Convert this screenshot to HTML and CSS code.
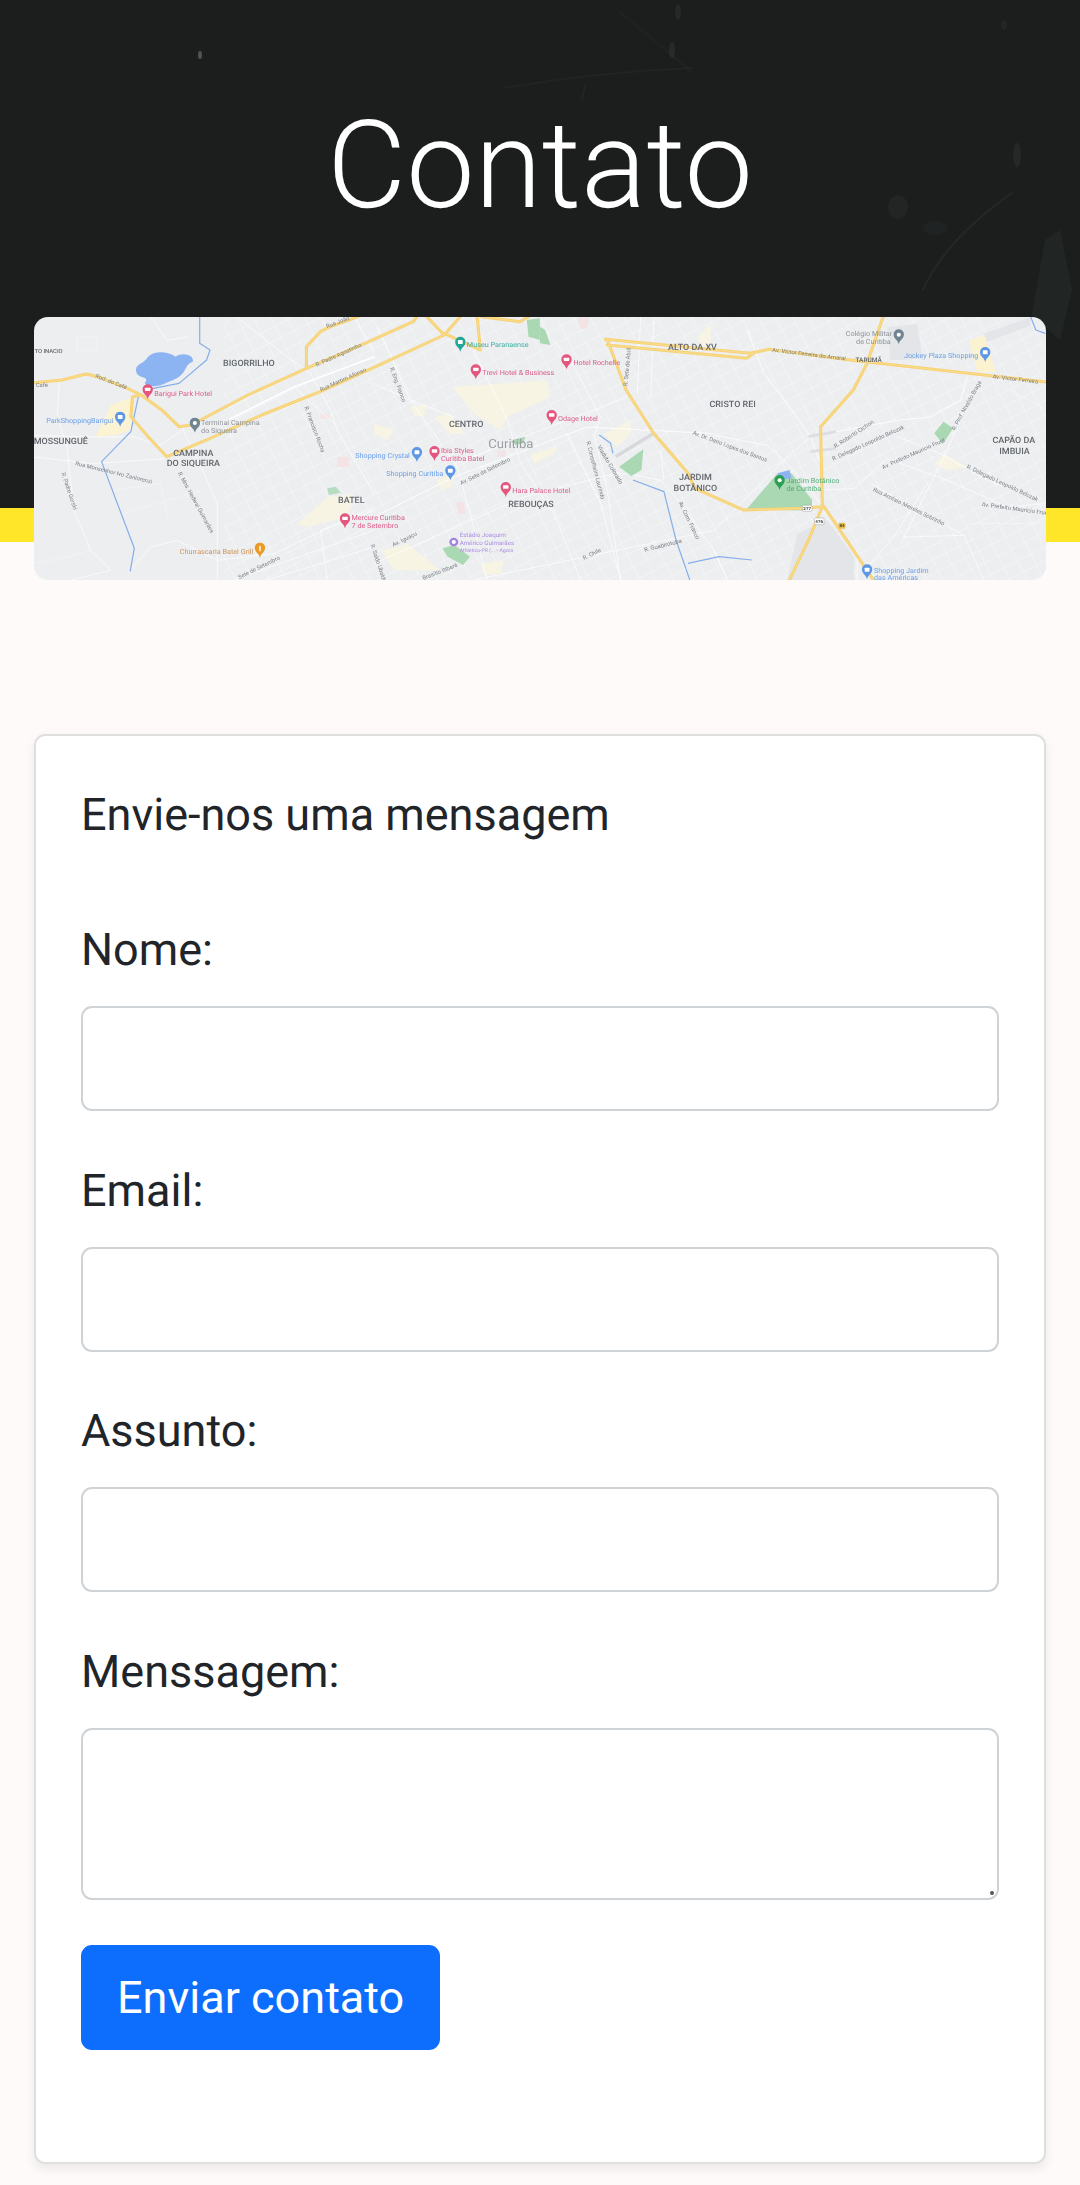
FILE: index.html
```html
<!DOCTYPE html>
<html lang="pt-BR">
<head>
    <meta charset="utf-8">
    <title>Contato</title>
    <link rel="stylesheet" href="styles.css">
</head>
<body>

<header class="hero">
    <svg class="hero-marks" viewBox="0 0 1080 508" xmlns="http://www.w3.org/2000/svg">
        <g fill="none" stroke="#8a9490" stroke-linecap="round">
            <path d="M503 88Q600 72 692 68" stroke-width="2" opacity=".1"/>
            <path d="M582 100L585 85" stroke-width="2" opacity=".12"/>
            <path d="M923 290Q945 240 1012 193" stroke-width="2" opacity=".16"/>
            <path d="M620 12L690 70" stroke-width="3" opacity=".06"/>
        </g>
        <g fill="#9aa5a0">
            <ellipse cx="200" cy="55" rx="2" ry="4" opacity=".8"/>
            <ellipse cx="672" cy="50" rx="3" ry="8" opacity=".18"/>
            <ellipse cx="678" cy="12" rx="3" ry="8" opacity=".15"/>
            <ellipse cx="1017" cy="155" rx="4" ry="12" opacity=".15"/>
            <ellipse cx="898" cy="207" rx="10" ry="12" opacity=".1"/>
            <ellipse cx="935" cy="228" rx="12" ry="7" opacity=".08"/>
            <ellipse cx="1004" cy="25" rx="3" ry="5" opacity=".12"/>
        </g>
        <path d="M1032 315L1045 240 1060 230 1072 290 1060 340Z" fill="#3d5045" opacity=".35"/>
    </svg>
    <h1 class="hero-title">Contato</h1>
</header>

<section class="map-box">
    <svg class="map" viewBox="0 0 1012 263" preserveAspectRatio="none" xmlns="http://www.w3.org/2000/svg">
        <defs>
            <pattern id="streets" width="15" height="13" patternUnits="userSpaceOnUse" patternTransform="rotate(-27)">
                <path d="M0 0H15M0 0V13" stroke="#fff" stroke-width="1" fill="none" opacity=".6"/>
            </pattern>
            <path id="pin" d="M0 23C-3 9-15 7-15-7a15 15 0 1 1 30 0C15 7 3 9 0 23Z"/>
            <g id="hotel">
                <use href="#pin"/>
                <rect x="-8" y="-12" width="16" height="10" rx="2" fill="#fff"/>
            </g>
            <g id="shop">
                <use href="#pin"/>
                <rect x="-7" y="-12" width="14" height="12" rx="2" fill="#fff"/>
            </g>
            <g id="place">
                <use href="#pin"/>
                <circle cy="-6" r="6" fill="#fff"/>
            </g>
            <path id="roadsLeft" d="M0 258L180 240 250 222 290 232 370 265 410 285 470 330 520 380 555 375 720 285 890 205 1060 130 1200 65 1225 30M385 290L380 350 430 410 485 470 600 420 760 345 930 275 1080 205 1290 105 1240 50M890 205L890 140 930 95 960 80 1040 50M385 290L410 285M1290 105L1345 40M1290 100L1395 150 1385 40M1400 50L1510 65 1535 50"/>
            <path id="roadsRight" d="M190 118L610 160 665 148 900 180 1480 247M195 135L600 175 620 160M195 118L250 270 330 400 430 520 450 565 590 630 760 625 820 620 815 380 910 270 950 190 1000 40M820 620L780 720 720 850M825 620L975 850"/>
        </defs>

        <rect width="1012" height="263" fill="#eceef0"/>
        <rect x="190" width="822" height="263" fill="url(#streets)"/>

        <!-- pale built-up areas and malls -->
        <g transform="scale(.3333)" fill="#fbf3d2">
            <path d="M185 360L230 265 295 240 290 340 240 355Z"/>
            <path d="M790 620L880 540 960 530 940 600 820 630Z" fill="#f7f4e4"/>
        </g>
        <g transform="translate(340,0) scale(.3333)" fill="#f7f4e4">
            <path d="M235 210L520 190 530 240 400 300 380 340 300 290Z"/>
            <path d="M110 270L160 260 150 300 120 295Z"/>
            <path d="M180 300L230 290 270 350 230 350Z"/>
            <path d="M0 320L60 340 40 370 0 350Z"/>
            <path d="M470 410L550 390 540 410 480 440Z"/>
            <path d="M690 350L770 310 770 350 730 390Z"/>
            <path d="M20 700L100 680 200 760 60 760Z"/>
            <path d="M320 740L390 730 380 770 330 775Z"/>
            <path d="M970 60L1010 20 1010 80 980 90Z"/>
            <path d="M190 490L240 470 230 510 200 520Z"/>
        </g>
        <g transform="translate(680,0) scale(.3333)">
            <path d="M765 70L810 55 845 165 790 165Z" fill="#faf2d0"/>
            <path d="M660 440L690 410 760 450 700 460Z" fill="#f7f4e4"/>
            <g fill="#e3e5e8">
                <path d="M520 30L610 20 625 125 530 130Z"/>
                <path d="M250 650L340 610 420 720 420 789 220 789Z"/>
                <path d="M810 50L950 0 950 25 820 75Z"/>
            </g>
        </g>
        <g transform="translate(340,0) scale(.3333)" fill="#f4e3e4">
            <path d="M610 0h35l-5 35h-22Z"/>
            <path d="M245 555h25l5 35h-22Z"/>
            <path d="M370 400h25v20h-25Z"/>
        </g>
        <g transform="scale(.3333)" fill="#f4e3e4">
            <path d="M910 420h35v30h-35Z"/>
            <path d="M860 290h25v15h-25Z"/>
        </g>

        <!-- streets -->
        <g fill="none" stroke="#fff" stroke-width="2" stroke-linecap="round" stroke-linejoin="round">
            <g transform="scale(.3333)">
                <path d="M0 355L180 360 300 360 380 385 450 335"/>
                <path d="M0 420L90 430 180 440 390 425"/>
                <path d="M75 200L70 290 100 400 120 580 170 700 230 760 110 789"/>
                <path d="M610 0L740 105 830 170 890 280 910 340 1020 530"/>
                <path d="M445 335L510 470 550 560 550 789"/>
                <path d="M280 770L350 690 430 670 550 730 720 710 1020 570"/>
                <path d="M860 640L1020 580M860 640L880 789"/>
                <path d="M600 789L1020 640M700 789L1020 690"/>
                <path d="M560 320L780 210 1020 120" stroke-width="5"/>
                <path d="M960 0L1020 100M780 210L900 320"/>
                <path d="M350 0L400 70 460 60"/>
                <path d="M130 60L190 60 190 100 130 100Z" stroke-width="1"/>
                <path d="M240 520L380 500 400 600M270 590L500 520" stroke-width="1"/>
                <path d="M0 740L100 720 170 700" stroke-width="1"/>
            </g>
            <g transform="translate(340,0) scale(.3333)">
                <path d="M10 30L110 250 250 450 280 560 340 789"/>
                <path d="M300 100L400 310 440 440 540 590 620 789"/>
                <path d="M540 70L600 150 680 300 660 360"/>
                <path d="M0 600L240 480 640 330 830 340 1020 350" stroke-width="2.5"/>
                <path d="M240 440L760 240"/>
                <path d="M0 740L450 540 720 470 760 470 860 490 920 560 1020 700"/>
                <path d="M580 350L680 560 740 789M660 350L700 520 740 789"/>
                <path d="M860 400L870 490"/>
                <path d="M300 789L1020 640"/>
                <path d="M840 0L830 240M800 0L790 230"/>
                <path d="M0 200L110 250 240 300"/>
            </g>
            <g transform="translate(680,0) scale(.3333)">
                <path d="M100 40L150 170 220 260 290 360 320 440" stroke-width="2.5"/>
                <path d="M0 355L160 385 230 450 320 560"/>
                <path d="M360 345L550 310 650 300 740 250 760 180" stroke-width="2.5"/>
                <path d="M550 360L680 410 820 490 980 545"/>
                <path d="M300 520L420 515 520 425 700 490 880 570 990 560"/>
                <path d="M0 640L100 540 220 420 290 360"/>
                <path d="M470 500L750 655 810 789"/>
                <path d="M640 500L540 660 470 740M750 655L570 660"/>
                <path d="M0 700L40 789" stroke-width="3"/>
                <path d="M430 700L430 789"/>
                <path d="M800 180L680 440 560 680"/>
                <path d="M850 200L1000 280M760 620L990 620" stroke-width="1"/>
            </g>
        </g>

        <!-- left half, in zoom units -->
        <g transform="translate(-34,-17) scale(.3443,.3333)">
            <g fill="none" stroke="#86aeea" stroke-width="3.5" stroke-linejoin="round">
                <path d="M580 50L580 130 610 150 600 180 520 250 430 268"/>
                <path d="M402 290L380 395 295 485 390 745 378 815"/>
            </g>
            <path d="M395 210C395 190 420 190 430 170 450 150 490 155 510 170 530 155 565 165 560 185 530 195 550 225 490 245 460 262 430 262 420 250 440 225 395 240 395 210Z" fill="#8cb4f2"/>
            <path d="M1285 745L1320 735 1365 770 1345 795 1300 770Z" fill="#a9d8b3"/>
            <path d="M950 565L975 560 990 578 955 585Z" fill="#b7dcc0"/>
            <path d="M1530 60L1568 55 1568 120 1535 110Z" fill="#a9d8b3"/>
            <path d="M1490 420L1525 410 1520 430 1495 435Z" fill="#a9d8b3"/>
            <use href="#roadsLeft" fill="none" stroke="#f7d272" stroke-width="9" stroke-linejoin="round" stroke-linecap="round"/>
            <use href="#roadsLeft" fill="none" stroke="#fbe6ae" stroke-width="1.5"/>

            <g fill="#63676c" font-weight="500" font-size="26">
                <text x="648" y="198">BIGORRILHO</text>
                <text x="98" y="433">MOSSUNGUÊ</text>
                <text x="503" y="468">CAMPINA</text>
                <text x="484" y="497">DO SIQUEIRA</text>
                <text x="1304" y="381">CENTRO</text>
                <text x="982" y="608">BATEL</text>
                <text x="1476" y="620">REBOUÇAS</text>
                <text x="100" y="160" font-size="17">TO INACIO</text>
                <text x="1418" y="444" font-size="38" font-weight="400" fill="#9a9ea3">Curitiba</text>
            </g>
            <g fill="#7d8287" font-size="17">
                <text x="276" y="232" transform="rotate(22 276 232)">Rod. do Café</text>
                <text x="104" y="262">Café</text>
                <text x="950" y="85" transform="rotate(-22 950 85)">Rua João</text>
                <text x="920" y="200" transform="rotate(-25 920 200)">R. Padre Agostinho</text>
                <text x="932" y="275" transform="rotate(-25 932 275)">Rua Martim Afonso</text>
                <text x="1132" y="205" transform="rotate(70 1132 205)">R. Eng. Franco</text>
                <text x="884" y="322" transform="rotate(70 884 322)">R. Francisco Rocha</text>
                <text x="218" y="495" transform="rotate(14 218 495)">Rua Monsenhor Ivo Zanlorenzi</text>
                <text x="178" y="520" transform="rotate(72 178 520)">R. Padre Gorski</text>
                <text x="516" y="520" transform="rotate(62 516 520)">R. Mns. Hedwal Guimarães</text>
                <text x="1340" y="555" transform="rotate(-27 1340 555)">Av. Sete de Setembro</text>
                <text x="695" y="838" transform="rotate(-27 695 838)">Sete de Setembro</text>
                <text x="1143" y="740" transform="rotate(-27 1143 740)">Av. Iguaçu</text>
                <text x="1076" y="735" transform="rotate(72 1076 735)">R. Saldo Ubaldo</text>
                <text x="1230" y="840" transform="rotate(-22 1230 840)">Brasílio Itiberê</text>
            </g>

            <g fill="#dc5c8c" font-size="21">
                <text x="448" y="287">Barigui Park Hotel</text>
                <text x="1401" y="225">Trevi Hotel &amp; Business</text>
                <text x="1281" y="459">Ibis Styles</text>
                <text x="1281" y="483">Curitiba Batel</text>
                <text x="1488" y="580">Hara Palace Hotel</text>
                <text x="1021" y="661">Mercure Curitiba</text>
                <text x="1021" y="685">7 de Setembro</text>
            </g>
            <g fill="#6ba1ea" font-size="21">
                <text x="134" y="369">ParkShoppingBarigui</text>
                <text x="1032" y="475">Shopping Crystal</text>
                <text x="1122" y="529">Shopping Curitiba</text>
            </g>
            <text x="584" y="375" fill="#8f9398" font-size="21">Terminal Campina</text>
            <text x="584" y="399" fill="#8f9398" font-size="21">do Siqueira</text>
            <text x="1356" y="141" fill="#3fafa4" font-size="21">Museu Paranaense</text>
            <text x="522" y="761" fill="#d19355" font-size="21">Churrascaria Batel Grill</text>
            <g fill="#ab8de0" font-size="18">
                <text x="1335" y="710">Estádio Joaquim</text>
                <text x="1335" y="734">Américo Guimarães</text>
                <text x="1335" y="756" font-size="15">Athletico-PR (... • Agora</text>
            </g>

            <g fill="#e5567f">
                <use href="#hotel" x="429" y="275"/>
                <use href="#hotel" x="1382" y="215"/>
                <use href="#hotel" x="1262" y="460"/>
                <use href="#hotel" x="1469" y="568"/>
                <use href="#hotel" x="1002" y="662"/>
            </g>
            <g fill="#5e97e6">
                <use href="#shop" x="349" y="357"/>
                <use href="#shop" x="1211" y="463"/>
                <use href="#shop" x="1308" y="518"/>
            </g>
            <use href="#place" x="566" y="375" fill="#70858f"/>
            <use href="#shop" x="1337" y="132" fill="#22a699"/>
            <use href="#pin" x="755" y="750" fill="#ea9a26"/>
            <rect x="753" y="738" width="4" height="16" fill="#fff"/>
            <circle cx="1318" cy="726" r="13" fill="#a583dc"/>
            <circle cx="1318" cy="726" r="6" fill="#fff"/>
        </g>

        <!-- right half, in zoom units -->
        <g transform="translate(506,-17) scale(.3443,.3333)">
            <path d="M220 470L330 400" stroke="#d6d8dc" stroke-width="10" fill="none"/>
            <path d="M780 410L860 395M785 455L860 445" stroke="#dcdee2" stroke-width="8" fill="none"/>
            <g fill="#a9d8b3">
                <path d="M605 622L690 520 730 520 790 600 790 632 600 628Z"/>
                <path d="M230 500L300 448 295 510 265 528Z"/>
                <path d="M1145 400L1172 365 1200 385 1170 432Z"/>
                <path d="M0 80L15 90 30 135 0 130Z"/>
            </g>
            <g fill="none" stroke="#86aeea" stroke-width="3.5" stroke-linejoin="round">
                <path d="M172 405L205 430 212 460"/>
                <path d="M270 540L360 575 395 720 435 840"/>
                <path d="M430 790L520 770 615 780"/>
                <path d="M1425 50L1440 90 1468 100"/>
            </g>
            <path d="M690 520L725 510 730 535 700 540Z" fill="#8cb4f2"/>
            <use href="#roadsRight" fill="none" stroke="#f7d272" stroke-width="9" stroke-linejoin="round" stroke-linecap="round"/>
            <use href="#roadsRight" fill="none" stroke="#fbe6ae" stroke-width="1.5"/>

            <g fill="#63676c" font-weight="500" font-size="26">
                <text x="372" y="151">ALTO DA XV</text>
                <text x="492" y="321">CRISTO REI</text>
                <text x="404" y="540">JARDIM</text>
                <text x="388" y="574">BOTÂNICO</text>
                <text x="1314" y="430">CAPÃO DA</text>
                <text x="1334" y="463">IMBUIA</text>
                <text x="916" y="187" font-size="19">TARUMÃ</text>
            </g>
            <g fill="#7d8287" font-size="17">
                <text x="674" y="155" transform="rotate(7 674 155)">Av. Victor Ferreira do Amaral</text>
                <text x="1314" y="235" transform="rotate(7 1314 235)">Av. Victor Ferreira</text>
                <text x="254" y="258" transform="rotate(-85 254 258)">R. Sete de Abril</text>
                <text x="442" y="403" transform="rotate(21 442 403)">Av. Dr. Dario Lopes dos Santos</text>
                <text x="858" y="445" transform="rotate(-34 858 445)">R. Roberto Cichon</text>
                <text x="852" y="482" transform="rotate(-25 852 482)">R. Delegado Leopoldo Belczak</text>
                <text x="988" y="510" transform="rotate(-25 988 490)">Av. Prefeito Maurício Fruet</text>
                <text x="1238" y="504" transform="rotate(26 1238 504)">R. Delegado Leopoldo Belczak</text>
                <text x="1282" y="618" transform="rotate(8 1282 618)">Av. Prefeito Maurício Fruet</text>
                <text x="966" y="572" transform="rotate(27 966 572)">Rua Arcésio Meireles Sobrinho</text>
                <text x="1205" y="392" transform="rotate(-62 1205 392)">R. Prof. Nivaldo Braga</text>
                <text x="134" y="425" transform="rotate(76 134 425)">R. Conselheiro Laurindo</text>
                <text x="166" y="440" transform="rotate(60 166 440)">Viaduto Colorado</text>
                <text x="402" y="608" transform="rotate(65 402 608)">Av. Com. Franco</text>
                <text x="304" y="755" transform="rotate(-14 304 755)">R. Guabirotuba</text>
                <text x="128" y="780" transform="rotate(-27 128 780)">R. Chile</text>
            </g>
            <g fill="#dc5c8c" font-size="21">
                <text x="97" y="195">Hotel Rochelle</text>
                <text x="52" y="363">Odage Hotel</text>
            </g>
            <text x="888" y="108" fill="#8f9398" font-size="21">Colégio Militar</text>
            <text x="918" y="132" fill="#8f9398" font-size="21">de Curitiba</text>
            <g fill="#6ba1ea" font-size="21">
                <text x="1057" y="174">Jockey Plaza Shopping</text>
                <text x="970" y="818">Shopping Jardim</text>
                <text x="970" y="840">das Américas</text>
            </g>
            <g fill="#4fae72" font-size="21">
                <text x="716" y="548">Jardim Botânico</text>
                <text x="716" y="572">de Curitiba</text>
            </g>
            <g fill="#e5567f">
                <use href="#hotel" x="77" y="185"/>
                <use href="#hotel" x="34" y="352"/>
            </g>
            <use href="#place" x="1042" y="110" fill="#70858f"/>
            <use href="#shop" x="1293" y="163" fill="#5e97e6"/>
            <use href="#shop" x="950" y="815" fill="#5e97e6"/>
            <use href="#place" x="696" y="547" fill="#2e9e54"/>
            <g font-size="13" font-weight="700" text-anchor="middle" fill="#444">
                <rect x="762" y="616" width="28" height="18" rx="4" fill="#fff" stroke="#777"/>
                <text x="776" y="630">277</text>
                <rect x="797" y="654" width="28" height="20" rx="4" fill="#fff" stroke="#777"/>
                <text x="811" y="669">476</text>
                <rect x="867" y="668" width="20" height="18" rx="3" fill="#e8c04c"/>
                <text x="877" y="682">84</text>
            </g>
        </g>
    </svg>
</section>

<main class="contact">
    <form class="contact-card">
        <h5 class="contact-heading">Envie-nos uma mensagem</h5>

        <div class="field">
            <label for="nome">Nome:</label>
            <input type="text" id="nome" name="nome">
        </div>

        <div class="field">
            <label for="email">Email:</label>
            <input type="email" id="email" name="email">
        </div>

        <div class="field">
            <label for="assunto">Assunto:</label>
            <input type="text" id="assunto" name="assunto">
        </div>

        <div class="field field-last">
            <label for="mensagem">Menssagem:</label>
            <div class="area-wrap">
                <textarea id="mensagem" name="mensagem"></textarea>
            </div>
        </div>

        <button type="submit" class="btn-send">Enviar contato</button>
    </form>
</main>

</body>
</html>
```

FILE: styles.css
```css
* {
    box-sizing: border-box;
}

body {
    margin: 0;
    background-color: #fffafa;
    font-family: Roboto, "Liberation Sans", sans-serif;
    font-size: 45px;
    line-height: 64px;
    color: #212529;
    text-rendering: geometricPrecision;
}

.hero {
    position: relative;
    height: 542px;
    padding-top: 93px;
    border-bottom: 34px solid #ffe629;
    background-color: #1c1e1e;
}

.hero-marks {
    position: absolute;
    top: 0;
    left: 0;
    width: 100%;
    height: 508px;
    opacity: 0.5;
}

.hero-title {
    position: relative;
    margin: 0;
    text-align: center;
    font-size: 122px;
    font-weight: 300;
    line-height: 1.2;
    color: #fff;
}

.map-box {
    position: relative;
    height: 263px;
    margin: -225px 34px 0;
    border-radius: 14px;
    overflow: hidden;
}

.map {
    display: block;
    width: 100%;
    height: 100%;
    font-family: Roboto, sans-serif;
    filter: blur(0.5px);
}

.contact {
    padding: 154px 34px 22px;
}

.contact-card {
    padding: 52px 45px 112px;
    background-color: #fff;
    border: 2px solid #dfdfdf;
    border-radius: 11px;
    box-shadow: 0 5px 11px rgba(0, 0, 0, 0.075);
}

.contact-heading {
    margin: 0 0 77px;
    font-size: 45px;
    font-weight: 400;
    line-height: 53px;
}

.field {
    margin-bottom: 47.5px;
}

.field-last {
    margin-bottom: 45.5px;
}

.field label {
    display: block;
    margin-bottom: 24px;
}

.field input, .field textarea {
    display: block;
    width: 100%;
    height: 105px;
    padding: 16px 33px;
    border: 2px solid #cfd3d6;
    border-radius: 11px;
    background-color: #fff;
    font: inherit;
    color: inherit;
}

.field textarea {
    height: 172px;
    resize: none;
}

.area-wrap {
    position: relative;
}

/* resize handle */
.area-wrap::after {
    content: "";
    position: absolute;
    right: 5px;
    bottom: 5px;
    width: 4px;
    height: 4px;
    border-radius: 50%;
    background-color: #555;
}

.btn-send {
    display: block;
    height: 105px;
    padding: 0 34px;
    border: 2px solid #0d6efd;
    border-radius: 11px;
    background-color: #0d6efd;
    font: inherit;
    color: #fff;
    cursor: pointer;
}
```
